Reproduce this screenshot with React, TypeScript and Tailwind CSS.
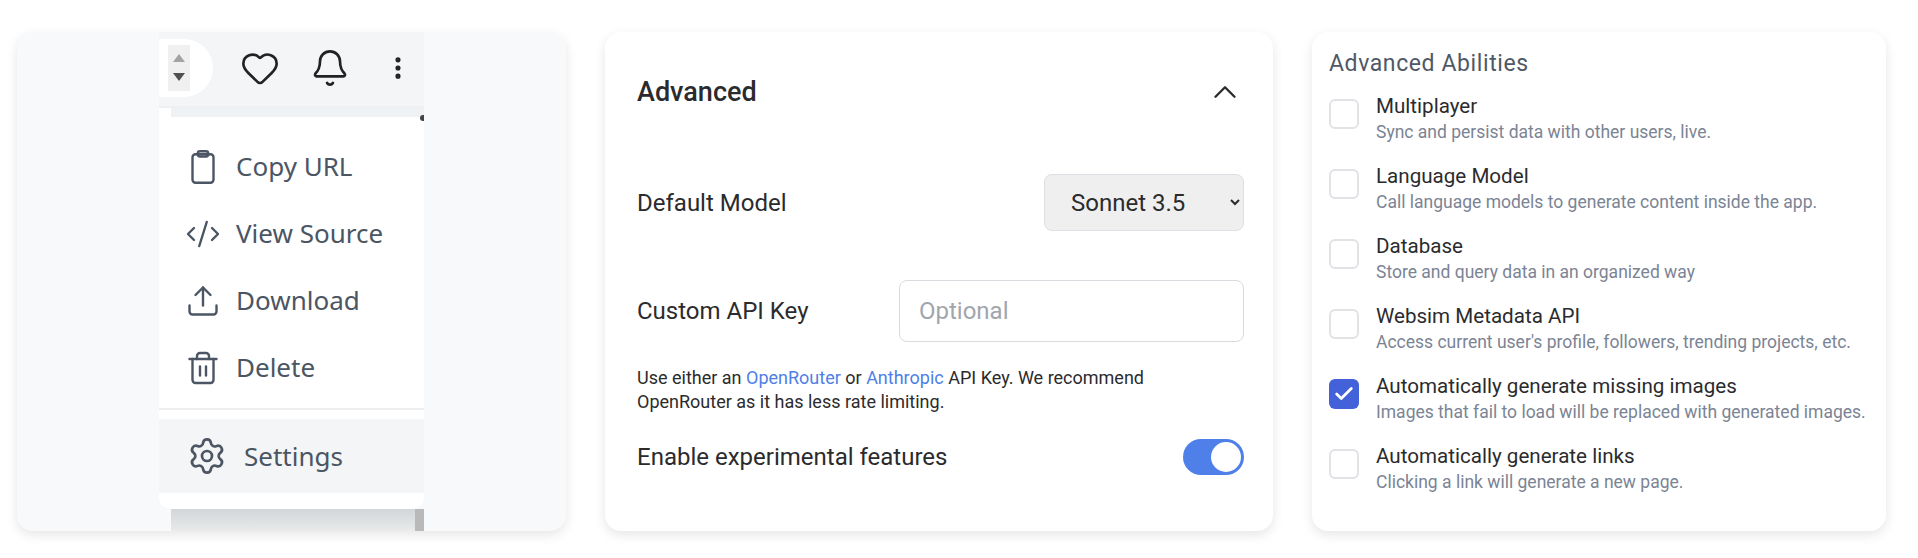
import React from "react";
import { Check, ChevronUp, CodeXml, Heart, Bell, MoreVertical, Settings, Trash2, Upload } from "lucide-react";

function ClipboardIcon({ className }: { className?: string; strokeWidth?: number }) {
  return (
    <svg className={className} viewBox="0 0 24 24" fill="none" stroke="currentColor" strokeWidth={1.6} strokeLinejoin="round">
      <rect x="5" y="3.5" width="14" height="19" rx="2" />
      <rect x="8.5" y="1.5" width="7" height="3.5" rx="1.5" />
    </svg>
  );
}

const abilities = [
  { title: "Multiplayer", desc: "Sync and persist data with other users, live.", checked: false },
  { title: "Language Model", desc: "Call language models to generate content inside the app.", checked: false },
  { title: "Database", desc: "Store and query data in an organized way", checked: false },
  { title: "Websim Metadata API", desc: "Access current user's profile, followers, trending projects, etc.", checked: false },
  { title: "Automatically generate missing images", desc: "Images that fail to load will be replaced with generated images.", checked: true },
  { title: "Automatically generate links", desc: "Clicking a link will generate a new page.", checked: false },
];

const menuItems = [
  { label: "Copy URL", icon: ClipboardIcon },
  { label: "View Source", icon: CodeXml },
  { label: "Download", icon: Upload },
  { label: "Delete", icon: Trash2 },
];

function MenuCard() {
  return (
    <div className="w-[549px] h-[499px] shrink-0 rounded-2xl bg-[#f8f9fa] shadow-[0_4px_12px_rgba(0,0,0,0.1)] overflow-hidden pl-[142px] font-['Noto_Sans',sans-serif]">
      <div className="w-[265px] h-full flex flex-col">
        {/* Top bar */}
        <div className="h-[76px] bg-[#f3f5f6] border-b-2 border-[#eef0f1] flex items-center pb-[3px]">
          <div className="w-[54px] h-[58px] bg-white rounded-r-[29px] flex items-center pl-[9px]">
            <div className="w-[22px] h-[46px] bg-[#f0f0f0] flex flex-col items-center justify-center gap-[11px]">
              <svg width="12" height="8" viewBox="0 0 12 8"><path d="M6 0l6 8H0z" fill="#a3a3a3" /></svg>
              <svg width="12" height="8" viewBox="0 0 12 8"><path d="M0 0h12L6 8z" fill="#505050" /></svg>
            </div>
          </div>
          <Heart className="ml-[27px] w-[40px] h-[40px] text-[#222]" strokeWidth={1.6} />
          <Bell className="ml-[30px] w-[40px] h-[40px] text-[#222]" strokeWidth={1.6} />
          <MoreVertical className="ml-[34px] w-[28px] h-[28px] text-[#222]" strokeWidth={2.4} />
        </div>
        <div className="h-[9px] flex relative">
          <div className="w-[12px] bg-white" />
          <div className="flex-1 bg-[#eff2f4]" />
          <div className="absolute right-0 top-[7px] w-[4px] h-[6px] rounded-l-full bg-[#444]" />
        </div>
        {/* Menu */}
        <div className="h-[392px] bg-white rounded-b-xl flex flex-col text-[#4b5563] text-[26px]">
          <div className="flex flex-col pt-[16px] h-[293px] border-b-2 border-[#eceef0]">
            {menuItems.map((item) => (
              <div key={item.label} className="h-[67px] flex items-center">
                <item.icon className="ml-[26px] w-[36px] h-[36px] shrink-0" strokeWidth={1.6} />
                <span className="ml-[15px]">{item.label}</span>
              </div>
            ))}
          </div>
          <div className="mt-[9px] h-[74px] bg-[#f3f5f6] flex items-center">
            <Settings className="ml-[28px] w-[40px] h-[40px] shrink-0" strokeWidth={1.6} />
            <span className="ml-[17px]">Settings</span>
          </div>
        </div>
        {/* Shadow under the menu */}
        <div className="flex-1 flex">
          <div className="w-[12px]" />
          <div className="flex-1 bg-gradient-to-b from-[#d3d6d8] to-[#e8eaeb]" />
          <div className="w-[9px] bg-[#b9b9b9]" />
        </div>
      </div>
    </div>
  );
}

function AdvancedCard() {
  return (
    <div className="w-[668px] h-[499px] shrink-0 rounded-2xl bg-white shadow-[0_4px_12px_rgba(0,0,0,0.1)] pl-[32px] pr-[29px] font-['Roboto',sans-serif] text-[#2b2b2e]">
      <div className="h-[120px] flex items-center justify-between">
        <span className="text-[27px] font-medium">Advanced</span>
        <ChevronUp className="w-[38px] h-[38px]" strokeWidth={1.5} />
      </div>
      <div className="h-[57px] mt-[22px] flex items-center justify-between">
        <span className="text-[24px]">Default Model</span>
        <select className="w-[200px] h-[57px] rounded-lg border border-[#dcdfe3] bg-[#efefef] pl-[22px] text-[24px] outline-none">
          <option>Sonnet 3.5</option>
        </select>
      </div>
      <div className="mt-[49px] h-[62px] flex items-center justify-between">
        <span className="text-[24px]">Custom API Key</span>
        <input
          placeholder="Optional"
          className="w-[345px] h-[62px] rounded-lg border border-[#d8dbdf] px-[19px] text-[24px] placeholder:text-[#a1a5ad] outline-none"
        />
      </div>
      <p className="mt-[24px] text-[18px] leading-[24px]">
        Use either an <span className="text-[#4f7fe6]">OpenRouter</span> or{" "}
        <span className="text-[#4f7fe6]">Anthropic</span> API Key. We recommend
        <br />
        OpenRouter as it has less rate limiting.
      </p>
      <div className="mt-[25px] flex items-center justify-between">
        <span className="text-[24px]">Enable experimental features</span>
        <div className="w-[61px] h-[36px] rounded-full bg-[#4f7fe8] flex items-center justify-end pr-[3px]">
          <div className="w-[30px] h-[30px] rounded-full bg-white" />
        </div>
      </div>
    </div>
  );
}

function AbilitiesCard() {
  return (
    <div className="w-[574px] h-[499px] shrink-0 rounded-2xl bg-white shadow-[0_4px_12px_rgba(0,0,0,0.1)] pl-[17px] pt-[16px] font-['Roboto',sans-serif]">
      <h2 className="text-[23px] leading-[32px] tracking-[0.6px] text-[#4f5866]">Advanced Abilities</h2>
      <div className="mt-[13px] flex flex-col">
        {abilities.map((a) => (
          <div key={a.title} className="h-[70px] flex">
            <div
              className={
                a.checked
                  ? "mt-[6px] w-[30px] h-[30px] rounded-md bg-[#4361d8] flex items-center justify-center"
                  : "mt-[6px] w-[30px] h-[30px] rounded-md bg-white border-2 border-[#e0e2e5]"
              }
            >
              {a.checked && <Check className="w-[22px] h-[22px] text-white" strokeWidth={3} />}
            </div>
            <div className="ml-[17px]">
              <div className="text-[20.6px] leading-[27px] text-[#2b2b2e]">{a.title}</div>
              <div className="text-[17.5px] leading-[24px] text-[#7b8494]">{a.desc}</div>
            </div>
          </div>
        ))}
      </div>
    </div>
  );
}

export default function App() {
  return (
    <div className="w-[1918px] h-[558px] bg-white flex gap-[39px] pl-[17px] pt-[32px] overflow-hidden">
      <MenuCard />
      <AdvancedCard />
      <AbilitiesCard />
    </div>
  );
}
